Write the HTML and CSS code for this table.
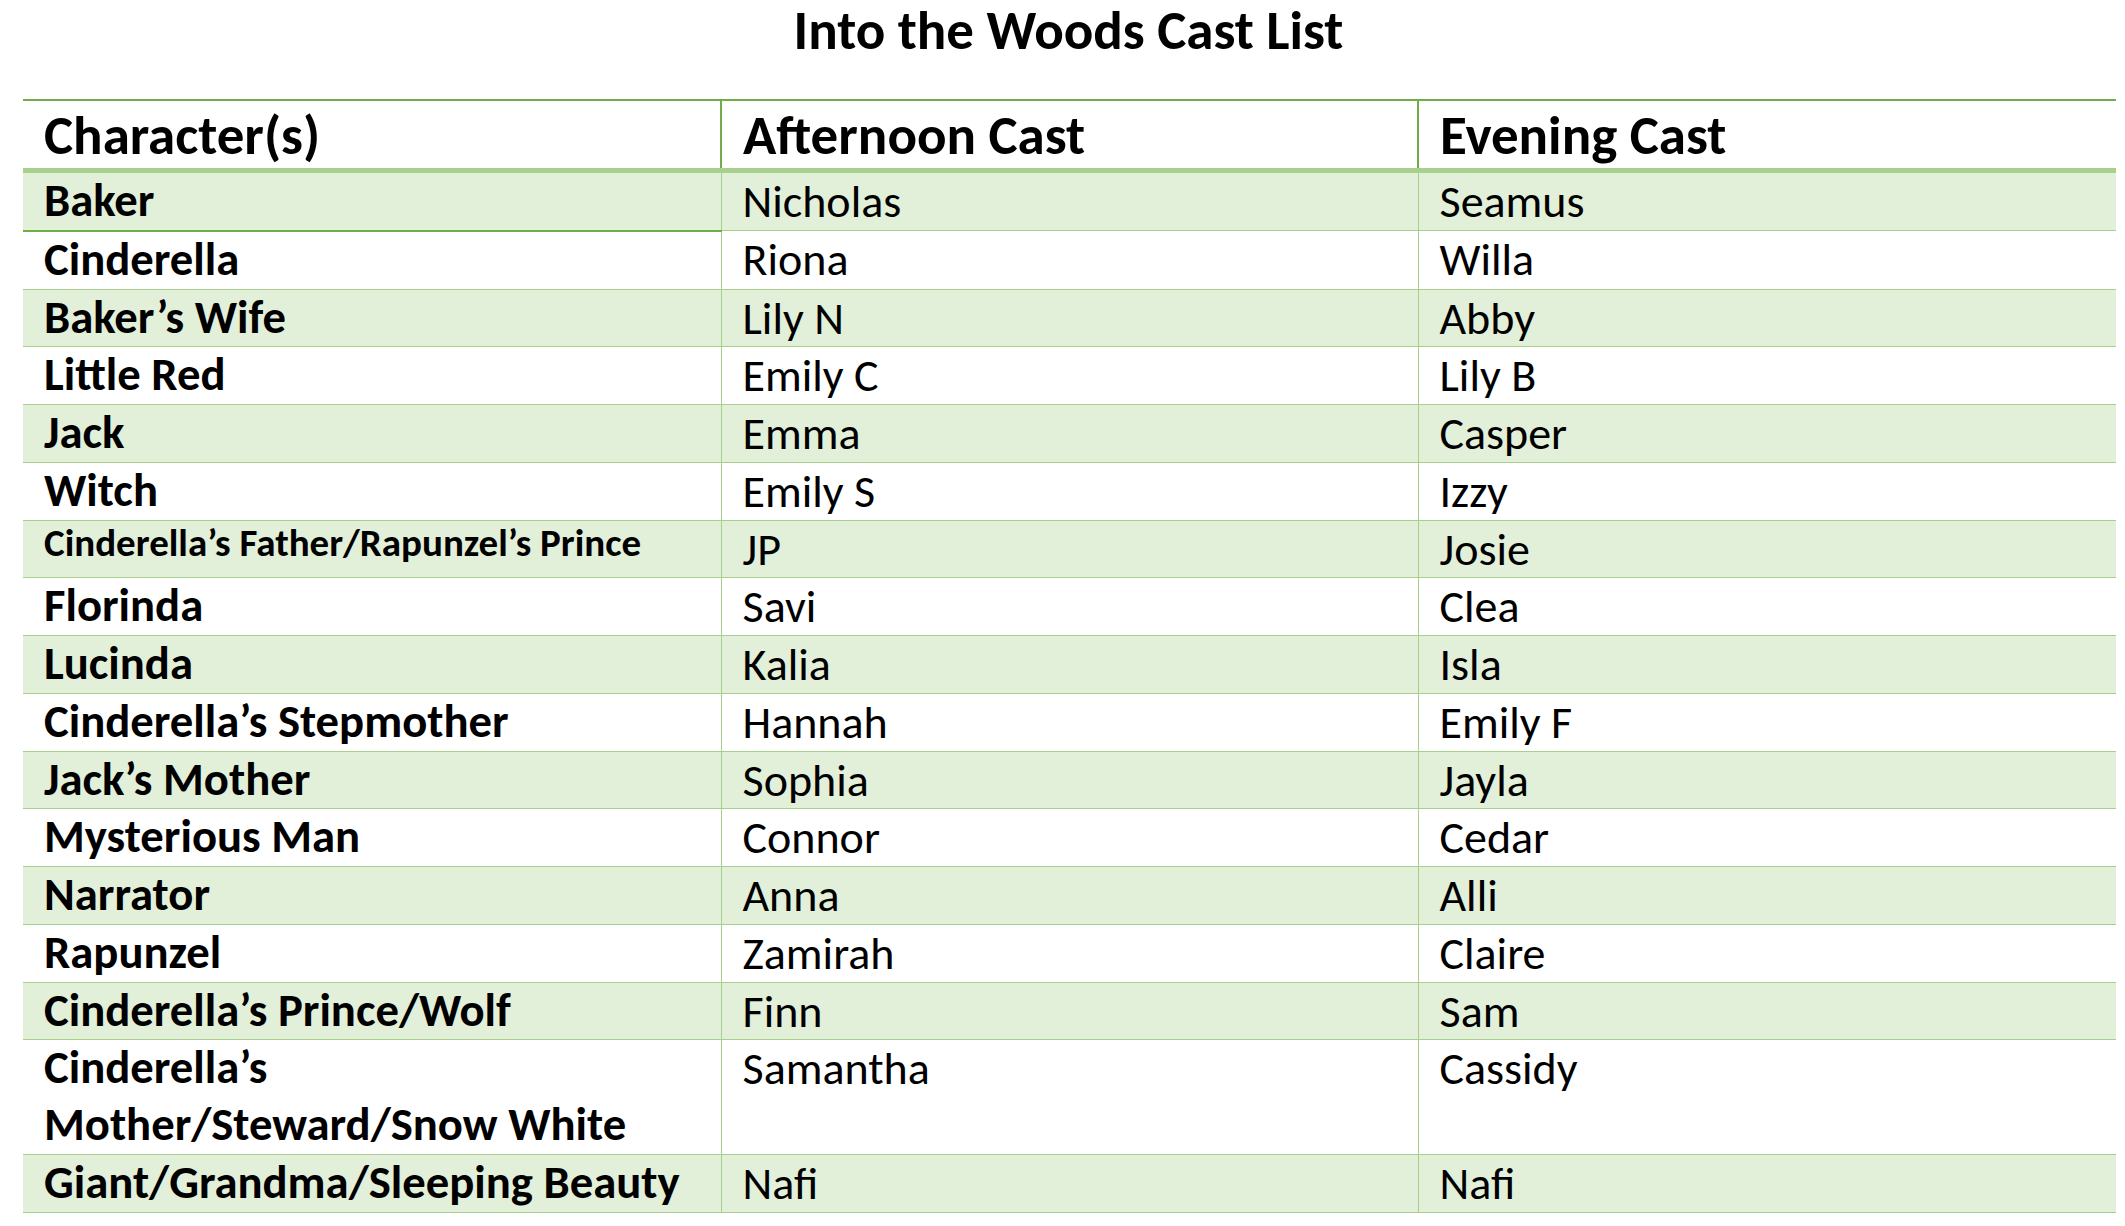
FILE: index.html
```html
<!DOCTYPE html>
<html lang="en">
<head>
<meta charset="utf-8">
<title>Into the Woods Cast List</title>
<link rel="stylesheet" href="styles.css">
</head>
<body>
<h1 class="title">Into the Woods Cast List</h1>
<table class="cast">
  <colgroup>
    <col class="c1"><col class="c2"><col class="c3">
  </colgroup>
  <thead>
    <tr><th>Character(s)</th><th>Afternoon Cast</th><th>Evening Cast</th></tr>
  </thead>
  <tbody>
    <tr class="band"><td class="role first">Baker</td><td>Nicholas</td><td>Seamus</td></tr>
    <tr><td class="role">Cinderella</td><td>Riona</td><td>Willa</td></tr>
    <tr class="band"><td class="role">Baker’s Wife</td><td>Lily N</td><td>Abby</td></tr>
    <tr><td class="role">Little Red</td><td>Emily C</td><td>Lily B</td></tr>
    <tr class="band"><td class="role">Jack</td><td>Emma</td><td>Casper</td></tr>
    <tr><td class="role">Witch</td><td>Emily S</td><td>Izzy</td></tr>
    <tr class="band"><td class="role small">Cinderella’s Father/Rapunzel’s Prince</td><td>JP</td><td>Josie</td></tr>
    <tr><td class="role">Florinda</td><td>Savi</td><td>Clea</td></tr>
    <tr class="band"><td class="role">Lucinda</td><td>Kalia</td><td>Isla</td></tr>
    <tr><td class="role">Cinderella’s Stepmother</td><td>Hannah</td><td>Emily F</td></tr>
    <tr class="band"><td class="role">Jack’s Mother</td><td>Sophia</td><td>Jayla</td></tr>
    <tr><td class="role">Mysterious Man</td><td>Connor</td><td>Cedar</td></tr>
    <tr class="band"><td class="role">Narrator</td><td>Anna</td><td>Alli</td></tr>
    <tr><td class="role">Rapunzel</td><td>Zamirah</td><td>Claire</td></tr>
    <tr class="band"><td class="role">Cinderella’s Prince/Wolf</td><td>Finn</td><td>Sam</td></tr>
    <tr><td class="role">Cinderella’s<br>Mother/Steward/Snow White</td><td>Samantha</td><td>Cassidy</td></tr>
    <tr class="band"><td class="role">Giant/Grandma/Sleeping Beauty</td><td>Nafi</td><td>Nafi</td></tr>
  </tbody>
</table>
</body>
</html>
```
FILE: styles.css
```css
html, body {
  margin: 0;
  padding: 0;
  background: #ffffff;
}
body {
  font-family: "Carlito", "Lato", "Liberation Sans", sans-serif;
  color: #000000;
}
.title {
  margin: 0;
  height: 99px;
  padding-top: 0;
  padding-left: 12px;
  font-size: 55px;
  line-height: 62px;
  font-weight: 700;
  text-align: center;
  box-sizing: border-box;
}
.cast {
  margin-left: 23px;
  width: 2093px;
  border-collapse: collapse;
  table-layout: fixed;
}
.c1 { width: 698px; }
.c2 { width: 697px; }
.c3 { width: 698px; }
.cast thead tr {
  border-top: 2px solid #70ad47;
}
.cast th {
  text-align: left;
  font-size: 55px;
  font-weight: 700;
  line-height: 65px;
  height: 67px;
  padding: 2px 20px 0 21px;
  box-sizing: border-box;
  vertical-align: top;
  border-bottom: 5px solid #a8d08d;
  border-right: 2px solid #70ad47;
}
.cast th:last-child { border-right: none; }
.cast td {
  font-size: 46px;
  line-height: 56.75px;
  padding: 0 20px 0 21px;
  vertical-align: top;
  border-bottom: 1px solid #a8d08d;
  border-right: 1px solid #a8d08d;
  white-space: nowrap;
}
.cast td:last-child { border-right: none; }
.cast tr.band td { background: #e2efd9; }
.cast td.role { font-weight: 700; font-size: 46.7px; }
.cast td.first { border-bottom: 2px solid #70ad47; }
.cast td.small { font-size: 39px; line-height: 43px; }
```
